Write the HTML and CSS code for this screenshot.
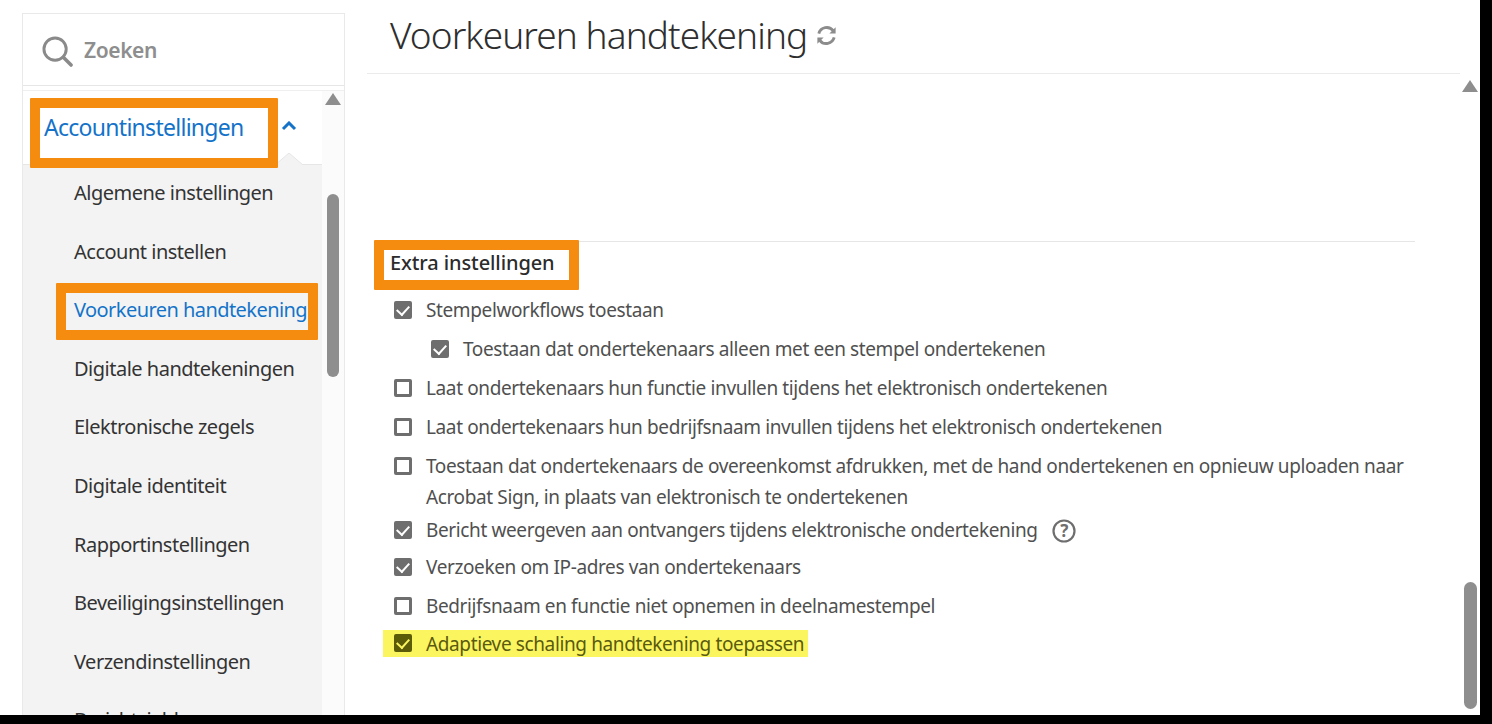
FILE: index.html
```html
<!DOCTYPE html>
<html lang="nl">
<head>
<meta charset="utf-8">
<title>Voorkeuren handtekening</title>
<link rel="stylesheet" href="styles.css">
</head>
<body>
<div class="frame">
  <div class="app">
    <aside class="sidebar">
      <div class="search">
        <svg class="search-icon" viewBox="0 0 32 32" width="31" height="31"><circle cx="13.5" cy="13.5" r="11.5" fill="none" stroke="#8a8a8a" stroke-width="3"/><path d="M22 22l8 8" stroke="#8a8a8a" stroke-width="3.6" stroke-linecap="round"/></svg>
        <span class="search-text">Zoeken</span>
      </div>
      <div class="side-body">
        <nav class="nav">
          <div class="nav-head">
            <span class="nav-title">Accountinstellingen</span>
            <svg class="caret" viewBox="0 0 16 10" width="16" height="10"><path d="M2 8l6-6 6 6" fill="none" stroke="#1473c9" stroke-width="3"/></svg>
            <svg class="notch" viewBox="0 0 28 12" width="28" height="12"><path d="M0 12L14 0l14 12z" fill="#f3f3f3"/><path d="M0 12L14 0l14 12" fill="none" stroke="#e6e6e6"/></svg>
          </div>
          <ul class="nav-list">
            <li>Algemene instellingen</li>
            <li>Account instellen</li>
            <li class="active">Voorkeuren handtekening</li>
            <li>Digitale handtekeningen</li>
            <li>Elektronische zegels</li>
            <li>Digitale identiteit</li>
            <li>Rapportinstellingen</li>
            <li>Beveiligingsinstellingen</li>
            <li>Verzendinstellingen</li>
            <li>Berichtsjablonen</li>
          </ul>
        </nav>
        <div class="side-scroll">
          <span class="arrow"></span>
          <span class="side-thumb"></span>
        </div>
      </div>
    </aside>
    <main class="main">
      <header class="title-bar">
        <h1>Voorkeuren handtekening</h1>
        <svg class="refresh" viewBox="0 0 24 24" width="23" height="23"><path d="M4 10a8.5 8.5 0 0 1 15-3" fill="none" stroke="#8c8c8c" stroke-width="3"/><path d="M21.5 3.5v6.500h-6.500z" fill="#8c8c8c"/><path d="M20 14a8.500 8.500 0 0 1-15 3" fill="none" stroke="#8c8c8c" stroke-width="3"/><path d="M2.500 20.500v-6.500h6.500z" fill="#8c8c8c"/></svg>
      </header>
      <div class="main-body">
        <section class="content">
          <div class="section">
            <h2>Extra instellingen</h2>
            <div class="opt"><i class="box on"></i><span>Stempelworkflows toestaan</span></div>
            <div class="opt sub"><i class="box on"></i><span>Toestaan dat ondertekenaars alleen met een stempel ondertekenen</span></div>
            <div class="opt"><i class="box"></i><span>Laat ondertekenaars hun functie invullen tijdens het elektronisch ondertekenen</span></div>
            <div class="opt"><i class="box"></i><span>Laat ondertekenaars hun bedrijfsnaam invullen tijdens het elektronisch ondertekenen</span></div>
            <div class="opt two"><i class="box"></i><span>Toestaan dat ondertekenaars de overeenkomst afdrukken, met de hand ondertekenen en opnieuw uploaden naar<br>Acrobat Sign, in plaats van elektronisch te ondertekenen</span></div>
            <div class="opt tight"><i class="box on"></i><span>Bericht weergeven aan ontvangers tijdens elektronische ondertekening</span>
              <svg class="help" viewBox="0 0 24 24" width="24" height="24"><circle cx="12" cy="12" r="10.500" fill="none" stroke="#6e6e6e" stroke-width="2.200"/><text x="12" y="18" text-anchor="middle" class="help-q">?</text></svg></div>
            <div class="opt"><i class="box on"></i><span>Verzoeken om IP-adres van ondertekenaars</span></div>
            <div class="opt"><i class="box"></i><span>Bedrijfsnaam en functie niet opnemen in deelnamestempel</span></div>
            <div class="opt mark"><i class="box on"></i><span>Adaptieve schaling handtekening toepassen</span></div>
          </div>
        </section>
        <div class="main-scroll">
          <span class="arrow"></span>
          <span class="main-thumb"></span>
        </div>
      </div>
    </main>
    <span class="callout c-account"></span>
    <span class="callout c-pref"></span>
    <span class="callout c-extra"></span>
  </div>
</div>
</body>
</html>
```
FILE: styles.css
```css
* { box-sizing: border-box; }
html, body { margin: 0; height: 100%; }
body { background: #000; overflow: hidden; font-family: "Noto Sans", "Open Sans", sans-serif; }
.frame { width: 1492px; height: 724px; background: #000; }
.app { position: relative; display: flex; width: 1480px; height: 715px; background: #fff; overflow: hidden; padding: 13px 0 0 22px; }

.sidebar { width: 323px; flex: none; display: flex; flex-direction: column; border: 1px solid #e9e9e9; border-bottom: 0; }
.search { height: 72px; flex: none; display: flex; align-items: center; padding-left: 19px; gap: 11px; border-bottom: 1px solid #e6e6e6; }
.search-icon { flex: none; margin-top: 4px; }
.search-text { font-size: 21px; font-weight: 600; color: #8e8e8e; letter-spacing: -0.4px; }
.side-body { flex: 1; display: flex; min-height: 0; margin-top: 4px; border-top: 1px solid #efefef; }
.nav { width: 299px; flex: none; }
.nav-head { position: relative; height: 74px; display: flex; align-items: center; padding: 0 0 0 21px; border-bottom: 1px solid #e6e6e6; background: #fff; }
.nav-title { font-size: 23px; color: #1473c9; letter-spacing: -0.72px; width: 237px; margin-top: -1px; }
.caret { flex: none; margin-top: -3px; }
.notch { position: absolute; left: 252px; bottom: -1px; }
.nav-list { margin: 0; padding: 0; list-style: none; height: 600px; background: #f3f3f3; overflow: hidden; }
.nav-list li { height: 58.6px; padding: 14px 0 0 51px; font-size: 20px; line-height: 28px; color: #333; letter-spacing: -0.5px; white-space: nowrap; }
.nav-list li.active { color: #1473c9; letter-spacing: -0.56px; }
.side-scroll { flex: 1; position: relative; background: #fbfbfb; }
.arrow { position: absolute; width: 0; height: 0; border-left: 8px solid transparent; border-right: 8px solid transparent; border-bottom: 12px solid #8e8e8e; }
.side-scroll .arrow { left: 3px; top: 2px; }
.side-thumb { position: absolute; left: 5px; top: 103px; width: 12px; height: 183px; border-radius: 6px; background: #8e8e8e; }

.main { flex: 1; min-width: 0; display: flex; flex-direction: column; margin-left: 22px; margin-top: -13px; }
.title-bar { height: 74px; flex: none; display: flex; align-items: center; padding: 0 0 4px 23px; gap: 8px; margin-right: 20px; border-bottom: 1px solid #ebebeb; }
h1 { margin: 0; font-size: 37px; font-weight: 300; color: #2e2e2e; letter-spacing: -0.92px; white-space: nowrap; font-family: "Noto Sans", sans-serif; }
.refresh { flex: none; margin-top: 2px; }
.main-body { flex: 1; display: flex; min-height: 0; }
.content { flex: 1; min-width: 0; padding: 167px 45px 0 11px; }
.section { border-top: 1px solid #e6e6e6; }
h2 { margin: 0; padding-left: 12px; height: 52.5px; font-size: 20px; line-height: 42px; font-weight: 500; color: #2c2c2c; letter-spacing: -0.1px; }
.opt { display: flex; align-items: flex-start; min-height: 39px; padding-left: 16px; font-size: 19px; line-height: 31px; color: #505050; letter-spacing: -0.38px; white-space: nowrap; }
.opt.sub { padding-left: 53px; }
.opt.two { min-height: 64px; }
.opt.tight { min-height: 37px; align-items: flex-start; }
.opt.mark { margin-left: 5px; padding-left: 11px; width: 425px; height: 27px; min-height: 27px; background: #fbf65f; color: #5a5a10; margin-top: 0; line-height: 29px; letter-spacing: -0.38px; }
.box { flex: none; position: relative; width: 18px; height: 18px; margin: 6px 14px 0 0; border: 3px solid #6e6e6e; border-radius: 2px; background: #fff; }
.box.on { background: #6e6e6e; }
.box.on::after { content: ""; position: absolute; left: 2px; top: -1px; width: 6px; height: 10px; border: solid #fff; border-width: 0 2.4px 2.4px 0; transform: rotate(42deg); }
.mark .box { margin-top: 4px; border-color: #5c5c08; }
.mark .box.on { background: #5c5c08; }
.mark .box.on::after { border-color: #fbf65f; }
.help { flex: none; margin: 4px 0 0 14px; }
.help-q { font-size: 17px; font-weight: 700; fill: #6e6e6e; font-family: "Noto Sans", sans-serif; }
.main-scroll { width: 20px; flex: none; position: relative; margin-right: 0; }
.main-scroll .arrow { left: 2px; top: 6px; }
.main-thumb { position: absolute; left: 4px; top: 508px; width: 13px; height: 127px; border-radius: 6.500px; background: #8e8e8e; }

.callout { position: absolute; border: 10px solid #f68c0f; pointer-events: none; border-radius: 1px; }
.c-account { left: 30px; top: 98px; width: 248px; height: 70px; }
.c-pref { left: 56px; top: 283px; width: 262px; height: 57px; }
.c-extra { left: 374px; top: 240px; width: 205px; height: 50px; }
```
